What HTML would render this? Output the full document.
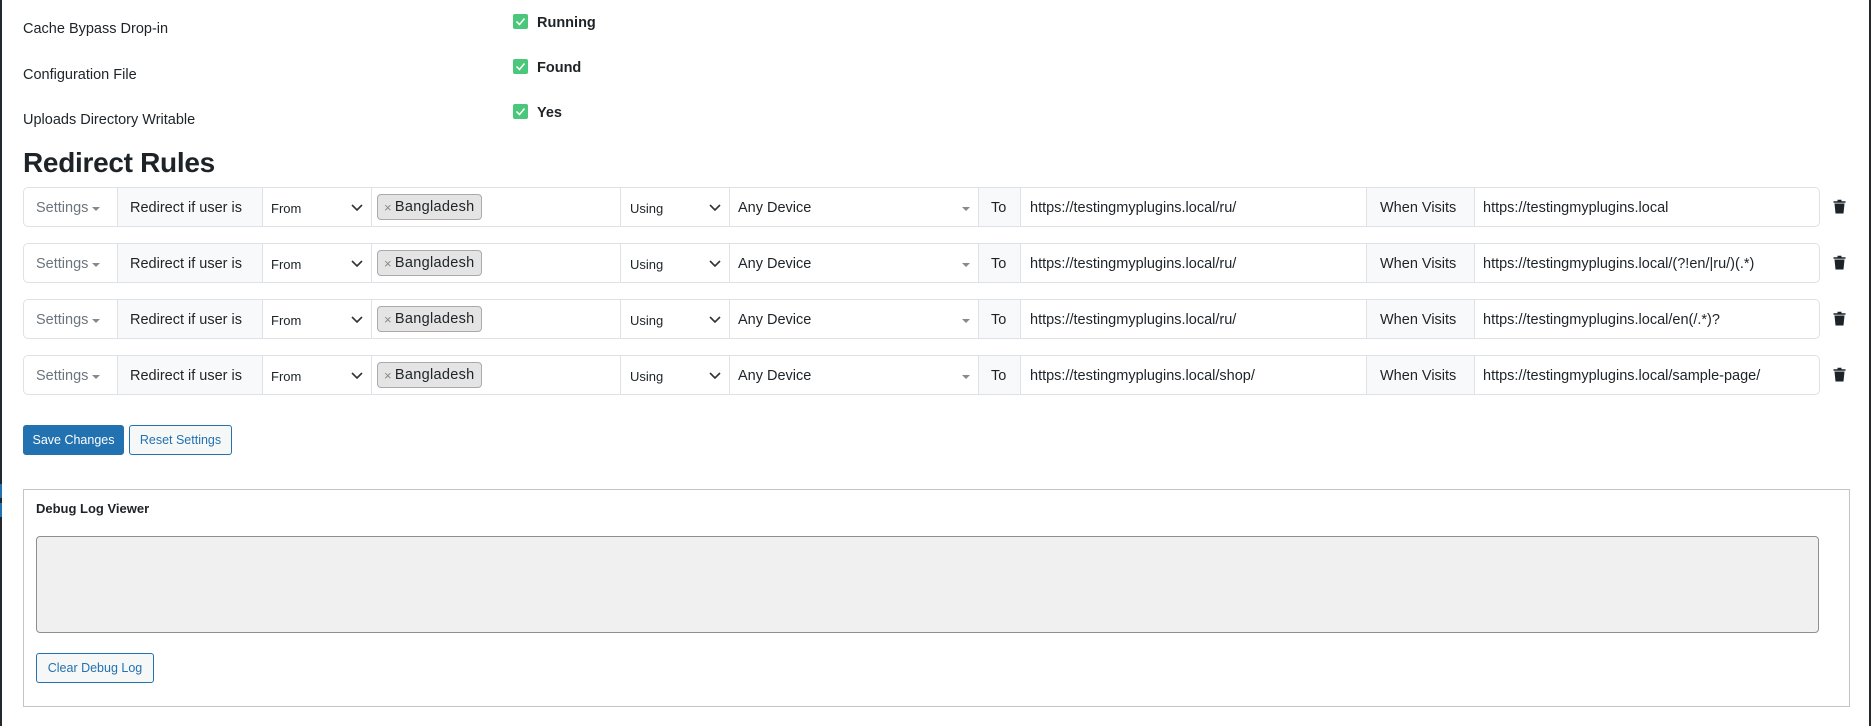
<!DOCTYPE html>
<html><head><meta charset="utf-8"><style>
*{box-sizing:border-box;margin:0;padding:0}
body{width:1871px;height:726px;background:#fff;font-family:"Liberation Sans",sans-serif;color:#1d2327;position:relative;overflow:hidden}
.a{position:absolute}
.lbl{font-size:14.5px;color:#1d2327}
.chk{width:15px;height:15px;background:#4ac77a;border-radius:2px}
.chk svg{display:block}
.st{font-weight:bold;font-size:14.5px}
h2{position:absolute;left:23px;top:147px;font-size:28px;font-weight:bold;color:#1d2327;letter-spacing:-0.3px}
.row{position:absolute;left:23px;width:1797px;height:40px;border:1px solid #dee2e6;border-radius:5px;display:flex;font-size:14.5px}
.row>div{height:38px;display:flex;align-items:center;border-right:1px solid #dee2e6;white-space:nowrap;padding-top:2px}
.row>div:last-child{border-right:none}
.g{background:#f8f9fa}
.car{display:inline-block;border-left:4px solid transparent;border-right:4px solid transparent;border-top:4px solid #888;margin-left:4px;margin-top:2px}
.chev{margin-left:auto;margin-right:8px}
.tag{background:#e4e4e4;border:1px solid #aaa;border-radius:4px;height:26px;padding:0 6px 0 6px;display:flex;align-items:center;font-size:14.5px;letter-spacing:0.3px}
.tag span{color:#888;margin-right:3px;font-size:13px}
.btn{position:absolute;height:30px;border-radius:3px;font-size:12.5px;display:flex;align-items:center;justify-content:center}
</style></head><body>
<div class="a" style="left:0;top:0;width:2px;height:726px;background:#23282d"></div>
<div class="a" style="left:0;top:484px;width:2px;height:14px;background:#2271b1"></div>
<div class="a" style="left:0;top:503px;width:2px;height:14px;background:#2271b1"></div>
<div class="a" style="right:0;top:0;width:2px;height:726px;background:#23282d"></div>

<div class="a lbl" style="left:23px;top:21px">Cache Bypass Drop-in</div>
<div class="a lbl" style="left:23px;top:67px">Configuration File</div>
<div class="a lbl" style="left:23px;top:112px">Uploads Directory Writable</div>

<div class="a chk" style="left:513px;top:14px"><svg width="15" height="15"><path d="M3.5 7.5l3 3 5-6" stroke="#fff" stroke-width="1.5" fill="none"/></svg></div>
<div class="a st" style="left:537px;top:15px">Running</div>
<div class="a chk" style="left:513px;top:59px"><svg width="15" height="15"><path d="M3.5 7.5l3 3 5-6" stroke="#fff" stroke-width="1.5" fill="none"/></svg></div>
<div class="a st" style="left:537px;top:60px">Found</div>
<div class="a chk" style="left:513px;top:104px"><svg width="15" height="15"><path d="M3.5 7.5l3 3 5-6" stroke="#fff" stroke-width="1.5" fill="none"/></svg></div>
<div class="a st" style="left:537px;top:105px">Yes</div>

<h2>Redirect Rules</h2>

<div class="row" style="top:187px">
<div style="width:94px;padding-left:12px;color:#6c757d">Settings<span class="car"></span></div>
<div class="g" style="width:145px;padding-left:12px">Redirect if user is</div>
<div style="width:109px;padding-left:8px;font-size:13px">From<svg class="chev" width="12" height="8"><path d="M1 1l5 5 5-5" stroke="#333" stroke-width="1.6" fill="none"/></svg></div>
<div style="width:249px;padding-left:5px;padding-top:0"><div class="tag"><span>×</span>Bangladesh</div></div>
<div style="width:109px;padding-left:9px;font-size:13px">Using<svg class="chev" width="12" height="8"><path d="M1 1l5 5 5-5" stroke="#333" stroke-width="1.6" fill="none"/></svg></div>
<div style="width:249px;padding-left:8px">Any Device<span class="car" style="margin-left:auto;margin-right:8px"></span></div>
<div class="g" style="width:42px;padding-left:12px">To</div>
<div style="width:346px;padding-left:9px">https://testingmyplugins.local/ru/</div>
<div class="g" style="width:108px;padding-left:13px">When Visits</div>
<div style="flex:1;padding-left:8px">https://testingmyplugins.local</div>
</div>

<div class="row" style="top:243px">
<div style="width:94px;padding-left:12px;color:#6c757d">Settings<span class="car"></span></div>
<div class="g" style="width:145px;padding-left:12px">Redirect if user is</div>
<div style="width:109px;padding-left:8px;font-size:13px">From<svg class="chev" width="12" height="8"><path d="M1 1l5 5 5-5" stroke="#333" stroke-width="1.6" fill="none"/></svg></div>
<div style="width:249px;padding-left:5px;padding-top:0"><div class="tag"><span>×</span>Bangladesh</div></div>
<div style="width:109px;padding-left:9px;font-size:13px">Using<svg class="chev" width="12" height="8"><path d="M1 1l5 5 5-5" stroke="#333" stroke-width="1.6" fill="none"/></svg></div>
<div style="width:249px;padding-left:8px">Any Device<span class="car" style="margin-left:auto;margin-right:8px"></span></div>
<div class="g" style="width:42px;padding-left:12px">To</div>
<div style="width:346px;padding-left:9px">https://testingmyplugins.local/ru/</div>
<div class="g" style="width:108px;padding-left:13px">When Visits</div>
<div style="flex:1;padding-left:8px">https://testingmyplugins.local/(?!en/|ru/)(.*)</div>
</div>

<div class="row" style="top:299px">
<div style="width:94px;padding-left:12px;color:#6c757d">Settings<span class="car"></span></div>
<div class="g" style="width:145px;padding-left:12px">Redirect if user is</div>
<div style="width:109px;padding-left:8px;font-size:13px">From<svg class="chev" width="12" height="8"><path d="M1 1l5 5 5-5" stroke="#333" stroke-width="1.6" fill="none"/></svg></div>
<div style="width:249px;padding-left:5px;padding-top:0"><div class="tag"><span>×</span>Bangladesh</div></div>
<div style="width:109px;padding-left:9px;font-size:13px">Using<svg class="chev" width="12" height="8"><path d="M1 1l5 5 5-5" stroke="#333" stroke-width="1.6" fill="none"/></svg></div>
<div style="width:249px;padding-left:8px">Any Device<span class="car" style="margin-left:auto;margin-right:8px"></span></div>
<div class="g" style="width:42px;padding-left:12px">To</div>
<div style="width:346px;padding-left:9px">https://testingmyplugins.local/ru/</div>
<div class="g" style="width:108px;padding-left:13px">When Visits</div>
<div style="flex:1;padding-left:8px">https://testingmyplugins.local/en(/.*)?</div>
</div>

<div class="row" style="top:355px">
<div style="width:94px;padding-left:12px;color:#6c757d">Settings<span class="car"></span></div>
<div class="g" style="width:145px;padding-left:12px">Redirect if user is</div>
<div style="width:109px;padding-left:8px;font-size:13px">From<svg class="chev" width="12" height="8"><path d="M1 1l5 5 5-5" stroke="#333" stroke-width="1.6" fill="none"/></svg></div>
<div style="width:249px;padding-left:5px;padding-top:0"><div class="tag"><span>×</span>Bangladesh</div></div>
<div style="width:109px;padding-left:9px;font-size:13px">Using<svg class="chev" width="12" height="8"><path d="M1 1l5 5 5-5" stroke="#333" stroke-width="1.6" fill="none"/></svg></div>
<div style="width:249px;padding-left:8px">Any Device<span class="car" style="margin-left:auto;margin-right:8px"></span></div>
<div class="g" style="width:42px;padding-left:12px">To</div>
<div style="width:346px;padding-left:9px">https://testingmyplugins.local/shop/</div>
<div class="g" style="width:108px;padding-left:13px">When Visits</div>
<div style="flex:1;padding-left:8px">https://testingmyplugins.local/sample-page/</div>
</div>

<svg class="a" style="left:1833px;top:199px" width="13" height="15"><path d="M4.5 1.5h4M0.5 3h12" stroke="#1d2327" stroke-width="1.6"/><path d="M1.5 4.5h10l-1 10h-8z" fill="#1d2327"/></svg>
<svg class="a" style="left:1833px;top:255px" width="13" height="15"><path d="M4.5 1.5h4M0.5 3h12" stroke="#1d2327" stroke-width="1.6"/><path d="M1.5 4.5h10l-1 10h-8z" fill="#1d2327"/></svg>
<svg class="a" style="left:1833px;top:311px" width="13" height="15"><path d="M4.5 1.5h4M0.5 3h12" stroke="#1d2327" stroke-width="1.6"/><path d="M1.5 4.5h10l-1 10h-8z" fill="#1d2327"/></svg>
<svg class="a" style="left:1833px;top:367px" width="13" height="15"><path d="M4.5 1.5h4M0.5 3h12" stroke="#1d2327" stroke-width="1.6"/><path d="M1.5 4.5h10l-1 10h-8z" fill="#1d2327"/></svg>

<div class="btn" style="left:23px;top:425px;width:101px;background:#2271b1;color:#fff;border:1px solid #2271b1">Save Changes</div>
<div class="btn" style="left:129px;top:425px;width:103px;background:#f6f7f7;color:#2271b1;border:1px solid #2271b1">Reset Settings</div>

<div class="a" style="left:23px;top:489px;width:1827px;height:218px;border:1px solid #c3c4c7"></div>
<div class="a" style="left:36px;top:501px;font-size:13px;font-weight:bold">Debug Log Viewer</div>
<div class="a" style="left:36px;top:536px;width:1783px;height:97px;background:#f0f0f0;border:1px solid #8c8f94;border-radius:4px"></div>
<div class="btn" style="left:36px;top:653px;width:118px;background:#f6f7f7;color:#2271b1;border:1px solid #2271b1">Clear Debug Log</div>
</body></html>
